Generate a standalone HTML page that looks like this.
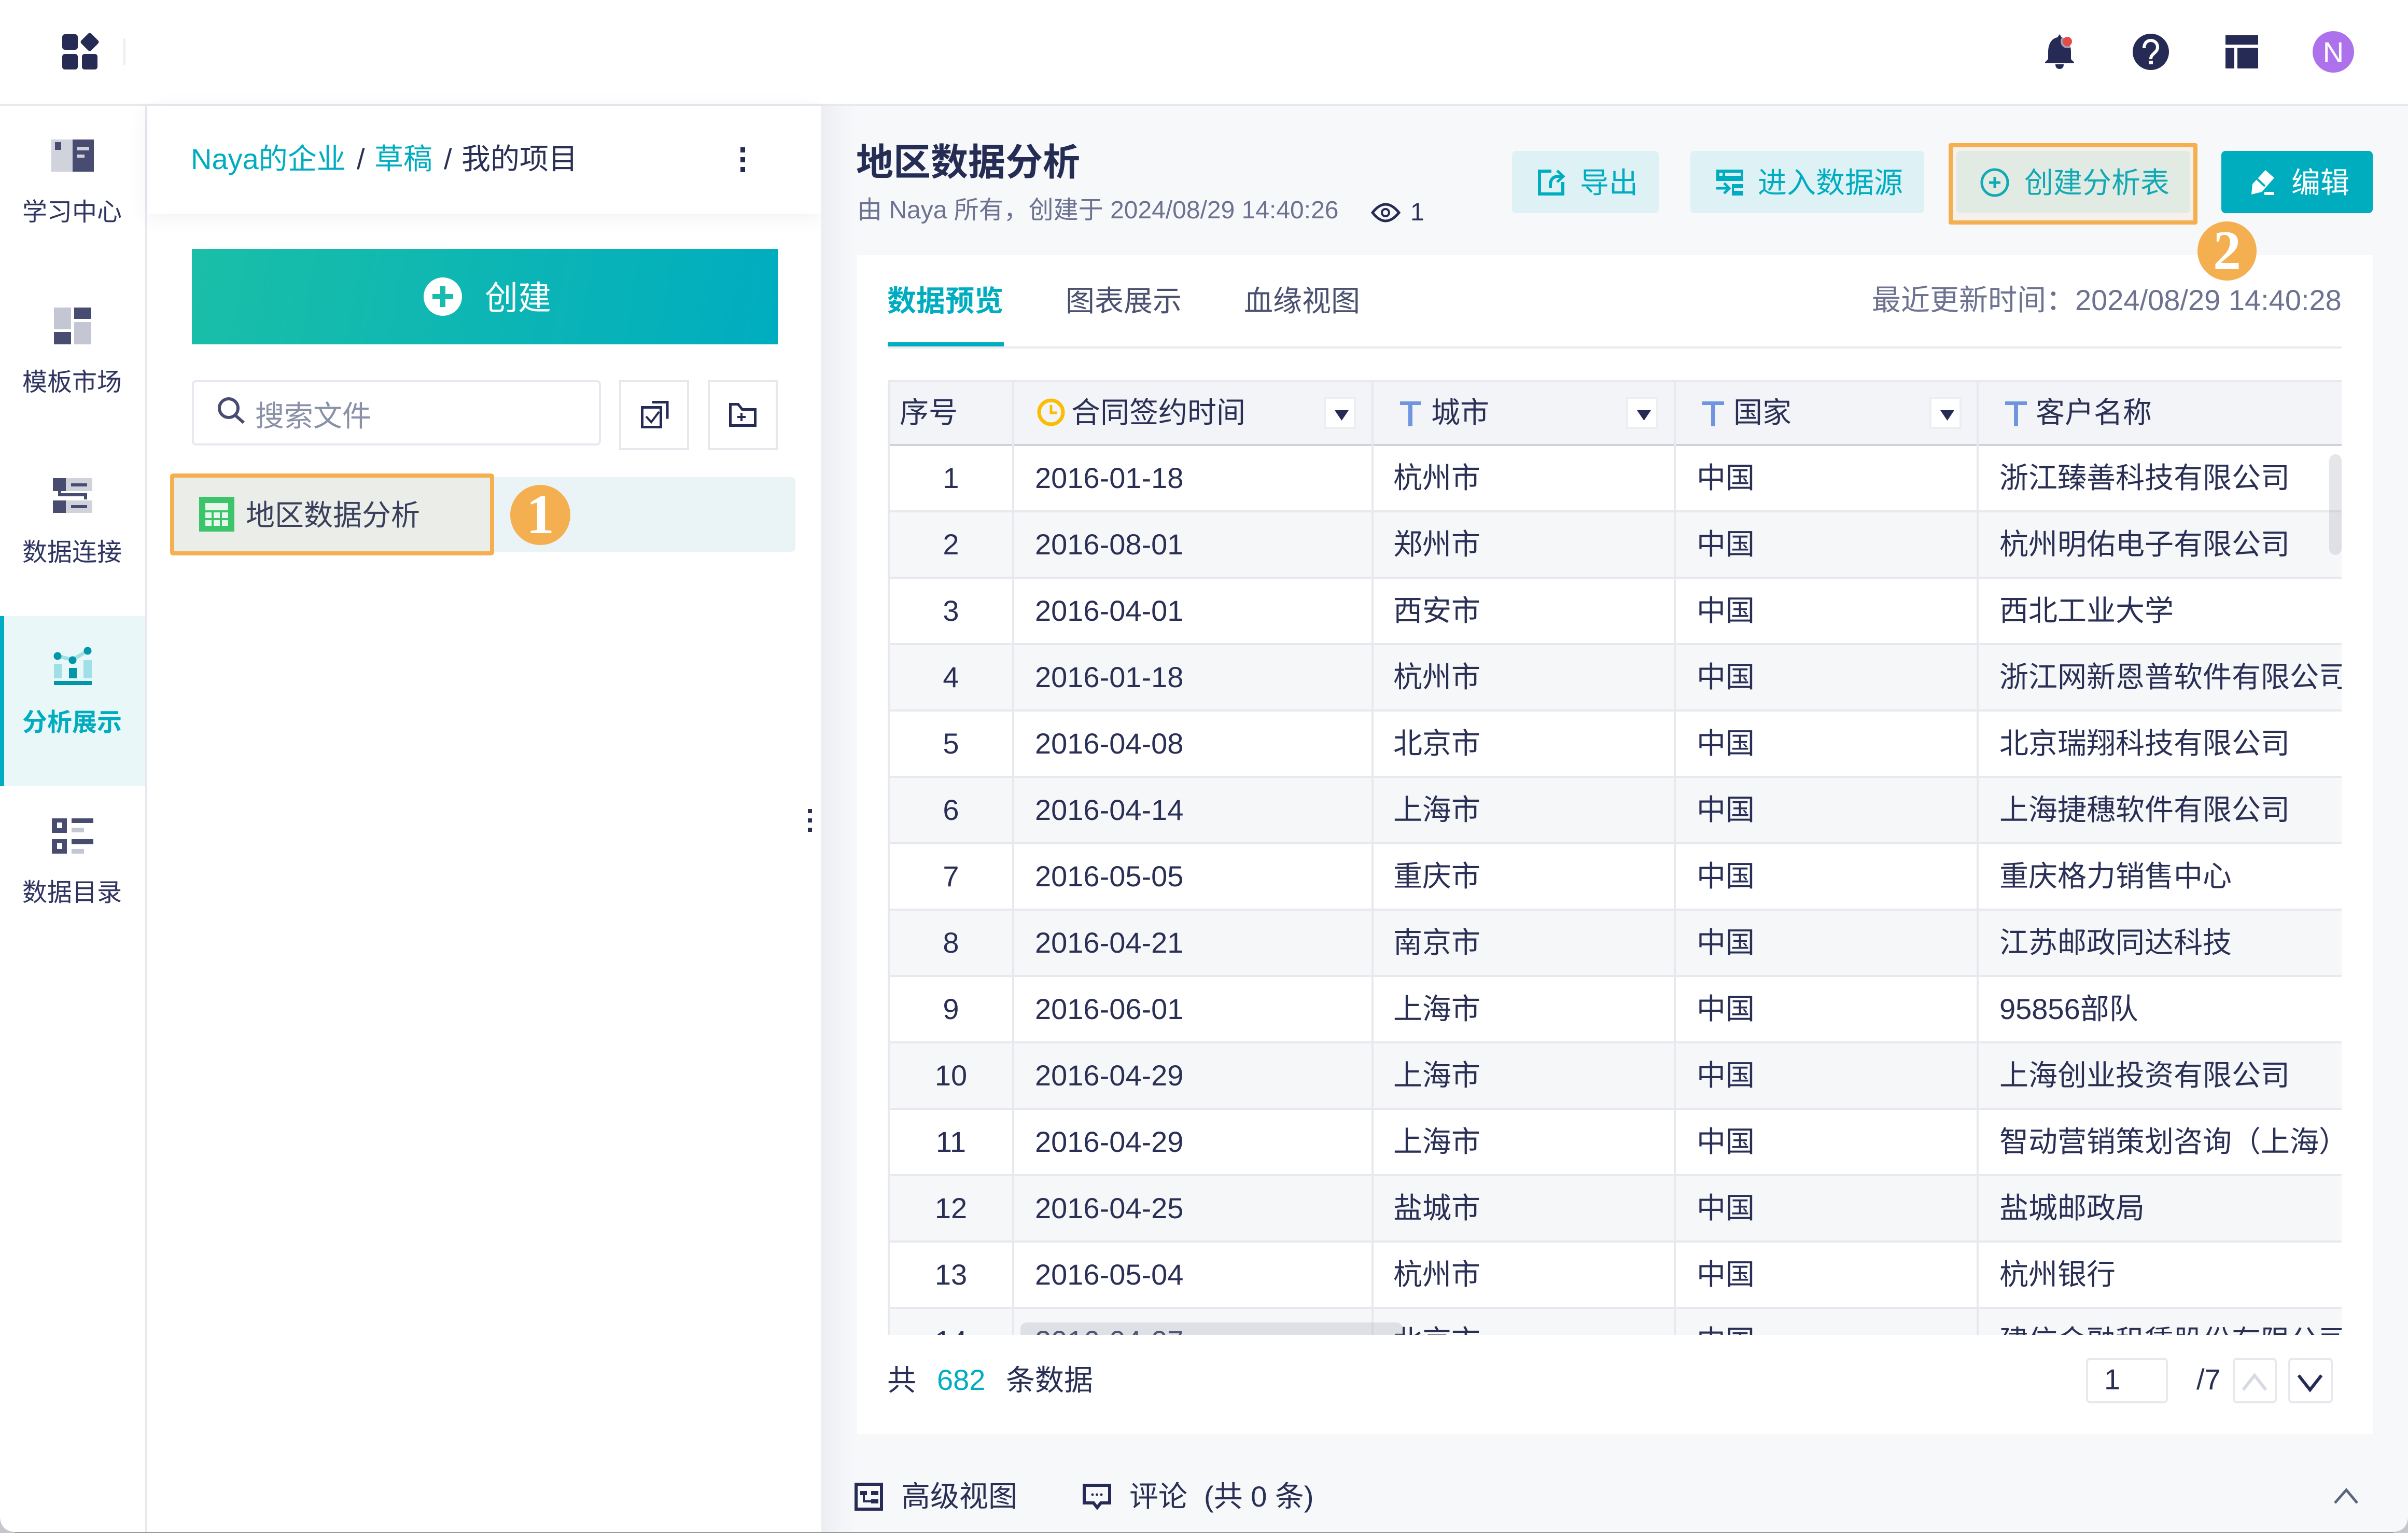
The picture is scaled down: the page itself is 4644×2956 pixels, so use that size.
<!DOCTYPE html>
<html lang="zh"><head><meta charset="utf-8"><title>地区数据分析</title>
<style>
*{box-sizing:border-box;margin:0;padding:0}
html,body{width:4644px;height:2956px;overflow:hidden;background:#fff}
body{position:relative;font-family:"Liberation Sans","Noto Sans CJK SC",sans-serif;color:#2a2f55;font-size:56px}
.a{position:absolute}
.t{position:absolute;white-space:nowrap;line-height:80px;font-size:56px}
.s{font-size:48px;color:#2f3560}
.teal{color:#00adc0}
.btn{position:absolute;top:291px;height:120px;border-radius:8px;background:#def1f5}
.r{position:absolute;left:0;width:2804px;height:128px;border-bottom:4px solid #e8e9ee;background:#fff}
.r.e{background:#f6f7f9}
.r i{position:absolute;top:0;font-style:normal;white-space:nowrap;line-height:124px}
.n{left:4px;width:236px;text-align:center}.d{left:284px}.c{left:975px}.g{left:1560px}.k{left:2144px}
.v{position:absolute;top:0;bottom:0;width:4px;background:#e8e9ee;z-index:2}
.dd{position:absolute;top:32px;width:62px;height:62px;background:#fff;border:4px solid #eceef2}
.h{position:absolute;top:0;line-height:126px;white-space:nowrap}
.pb{position:absolute;top:2618px;height:88px;border:4px solid #e8e9ee;border-radius:8px;background:#fff}
</style></head><body>

<!-- chrome -->
<div class="a" style="left:0;top:200px;width:4644px;height:4px;background:#e8e9ef"></div>
<div class="a" style="left:238px;top:74px;width:4px;height:52px;background:#eceef2"></div>
<div class="a" style="left:280px;top:204px;width:4px;height:2752px;background:#e8e9ef"></div>
<div class="a" style="left:0;top:1188px;width:280px;height:328px;background:#e9f7f9;border-left:8px solid #00adc0"></div>

<!-- left panel -->
<div class="a" style="left:284px;top:204px;width:1300px;height:208px;background:#fff;box-shadow:0 8px 36px rgba(40,50,90,.07)"></div>
<div class="a" style="left:370px;top:480px;width:1130px;height:184px;background:linear-gradient(100deg,#1abfa7 0%,#00adc0 100%)"></div>
<div class="a" style="left:370px;top:733px;width:789px;height:126px;background:#fff;border:4px solid #e6e9ef;border-radius:8px"></div>
<div class="a" style="left:1194px;top:733px;width:135px;height:135px;border:4px solid #e6e8ee"></div>
<div class="a" style="left:1365px;top:733px;width:135px;height:135px;border:4px solid #e6e8ee"></div>
<div class="a" style="left:900px;top:920px;width:634px;height:144px;background:#eaf3f6;border-radius:8px"></div>
<div class="a" style="left:328px;top:913px;width:625px;height:158px;background:#ebeee8;border:8px solid #f4af50;border-radius:6px"></div>
<div class="a" style="left:984px;top:935px;width:116px;height:116px;border-radius:50%;background:#f4af50"></div>
<div class="a" style="left:1558px;top:1560px;width:8px;height:8px;background:#2a2f55"></div>
<div class="a" style="left:1558px;top:1578px;width:8px;height:8px;background:#2a2f55"></div>
<div class="a" style="left:1558px;top:1596px;width:8px;height:8px;background:#2a2f55"></div>

<!-- right panel -->
<div class="a" style="left:1584px;top:204px;width:3060px;height:2752px;background:linear-gradient(90deg,#eceef2 0,#f4f5f8 40px,#f6f8fa 70px)"></div>
<div class="a" style="left:1653px;top:492px;width:2923px;height:2273px;background:#fff"></div>
<div class="btn" style="left:2916px;width:283px"></div>
<div class="btn" style="left:3260px;width:451px"></div>
<div class="a" style="left:3758px;top:276px;width:480px;height:157px;background:#f6f1ea;border:8px solid #f4af50;border-radius:4px"></div>
<div class="btn" style="left:3773px;width:451px;background:#e1ebe4"></div>
<div class="btn" style="left:4284px;width:292px;background:#00adbf"></div>
<div class="a" style="left:1712px;top:668px;width:2804px;height:4px;background:#e9eaef"></div>
<div class="a" style="left:1712px;top:660px;width:224px;height:8px;background:#00adc0"></div>

<!-- table -->
<div class="a" style="left:1712px;top:733px;width:2804px;height:1841px;overflow:hidden;background:#fff">
  <div class="a" style="left:0;top:0;width:2804px;height:127px;background:#f3f4f8;border-top:4px solid #e8e9ee;border-bottom:4px solid #cfd2da"></div>
  <div class="h" style="left:23px">序号</div>
  <div class="h" style="left:354px">合同签约时间</div>
  <div class="h" style="left:1048px">城市</div>
  <div class="h" style="left:1631px">国家</div>
  <div class="h" style="left:2214px">客户名称</div>
  <div class="dd" style="left:841px"></div>
  <div class="dd" style="left:1424px"></div>
  <div class="dd" style="left:2009px"></div>
  <div class="v" style="left:0"></div><div class="v" style="left:240px"></div><div class="v" style="left:933px"></div><div class="v" style="left:1516px"></div><div class="v" style="left:2100px"></div>
  <div class="r" style="top:127px"><i class="n">1</i><i class="d">2016-01-18</i><i class="c">杭州市</i><i class="g">中国</i><i class="k">浙江臻善科技有限公司</i></div>
  <div class="r e" style="top:255px"><i class="n">2</i><i class="d">2016-08-01</i><i class="c">郑州市</i><i class="g">中国</i><i class="k">杭州明佑电子有限公司</i></div>
  <div class="r" style="top:383px"><i class="n">3</i><i class="d">2016-04-01</i><i class="c">西安市</i><i class="g">中国</i><i class="k">西北工业大学</i></div>
  <div class="r e" style="top:511px"><i class="n">4</i><i class="d">2016-01-18</i><i class="c">杭州市</i><i class="g">中国</i><i class="k">浙江网新恩普软件有限公司</i></div>
  <div class="r" style="top:639px"><i class="n">5</i><i class="d">2016-04-08</i><i class="c">北京市</i><i class="g">中国</i><i class="k">北京瑞翔科技有限公司</i></div>
  <div class="r e" style="top:767px"><i class="n">6</i><i class="d">2016-04-14</i><i class="c">上海市</i><i class="g">中国</i><i class="k">上海捷穗软件有限公司</i></div>
  <div class="r" style="top:895px"><i class="n">7</i><i class="d">2016-05-05</i><i class="c">重庆市</i><i class="g">中国</i><i class="k">重庆格力销售中心</i></div>
  <div class="r e" style="top:1023px"><i class="n">8</i><i class="d">2016-04-21</i><i class="c">南京市</i><i class="g">中国</i><i class="k">江苏邮政同达科技</i></div>
  <div class="r" style="top:1151px"><i class="n">9</i><i class="d">2016-06-01</i><i class="c">上海市</i><i class="g">中国</i><i class="k">95856部队</i></div>
  <div class="r e" style="top:1279px"><i class="n">10</i><i class="d">2016-04-29</i><i class="c">上海市</i><i class="g">中国</i><i class="k">上海创业投资有限公司</i></div>
  <div class="r" style="top:1407px"><i class="n">11</i><i class="d">2016-04-29</i><i class="c">上海市</i><i class="g">中国</i><i class="k">智动营销策划咨询（上海）</i></div>
  <div class="r e" style="top:1535px"><i class="n">12</i><i class="d">2016-04-25</i><i class="c">盐城市</i><i class="g">中国</i><i class="k">盐城邮政局</i></div>
  <div class="r" style="top:1663px"><i class="n">13</i><i class="d">2016-05-04</i><i class="c">杭州市</i><i class="g">中国</i><i class="k">杭州银行</i></div>
  <div class="r e" style="top:1791px"><i class="n">14</i><i class="d">2016-04-07</i><i class="c">北京市</i><i class="g">中国</i><i class="k">建信金融租赁股份有限公司</i></div>
  <div class="a" style="left:2780px;top:143px;width:24px;height:194px;background:rgba(170,172,182,.3);border-radius:12px;z-index:3"></div>
  <div class="a" style="left:256px;top:1817px;width:737px;height:48px;background:rgba(170,172,182,.3);border-radius:12px;z-index:3"></div>
</div>

<div class="pb" style="left:4023px;width:158px"></div>
<div class="pb" style="left:4306px;width:85px"></div>
<div class="pb" style="left:4413px;width:86px"></div>

<!-- icons -->
<svg class="a" style="left:0;top:0" width="4644" height="2956" viewBox="0 0 4644 2956" xmlns="http://www.w3.org/2000/svg">
 <g fill="#252b55">
  <rect x="120" y="66" width="30" height="30" rx="5"/><rect x="120" y="104" width="30" height="30" rx="5"/><rect x="158" y="104" width="30" height="30" rx="5"/>
  <rect x="159.500" y="67.500" width="27" height="27" rx="4" transform="rotate(45 173 81)"/>
  <path d="M3972 66l4 6c12 2 18 14 18 28v14l6 6v2h-56v-2l6-6v-14c0-14 6-26 18-28z"/>
  <path d="M3964 124h16c0 6-3 9-8 9s-8-3-8-9z"/>
  <circle cx="4148" cy="100" r="35"/>
  <rect x="4292" y="68" width="63" height="18"/><rect x="4292" y="92" width="17" height="40"/><rect x="4315" y="92" width="40" height="40"/>
 </g>
 <circle cx="3987" cy="80" r="13" fill="#fff" opacity=".55"/><circle cx="3987" cy="80" r="9" fill="#e84a4a"/>
 <path d="M4135 93c0-9 5-15 13-15s13 6 13 13c0 6-4 9-7 12s-6 5-6 11" fill="none" stroke="#fff" stroke-width="6"/><rect x="4144" y="117" width="8" height="7" fill="#fff"/>
 <circle cx="4500" cy="100" r="40" fill="#ae71ec"/>
 <!-- sidebar -->
 <rect x="99" y="269" width="41" height="62" fill="#d0d2dc"/><rect x="140" y="269" width="41" height="62" fill="#474c70"/>
 <rect x="106" y="274" width="12" height="15" fill="#474c70"/><rect x="148" y="283" width="24" height="7" fill="#d0d2dc"/><rect x="148" y="298" width="15" height="6" fill="#d0d2dc"/>
 <rect x="104" y="593" width="33" height="42" fill="#c4c6d4"/><rect x="104" y="640" width="33" height="24" fill="#474c70"/><rect x="143" y="593" width="33" height="22" fill="#474c70"/><rect x="143" y="621" width="33" height="43" fill="#c4c6d4"/>
 <rect x="127" y="922" width="51" height="25" fill="#d0d2dc"/><rect x="127" y="965" width="51" height="24" fill="#d0d2dc"/>
 <rect x="102" y="922" width="25" height="25" fill="#474c70"/><rect x="102" y="965" width="25" height="24" fill="#474c70"/>
 <rect x="137" y="932" width="31" height="6" fill="#474c70"/><rect x="137" y="974" width="31" height="6" fill="#474c70"/>
 <path d="M115 947v7h50v9" fill="none" stroke="#474c70" stroke-width="6"/>
 <path d="M111 1265l29 7 29-17" fill="none" stroke="#9fe0e6" stroke-width="7"/>
 <rect x="104" y="1280" width="15" height="28" fill="#9fe0e6"/><rect x="161" y="1273" width="16" height="35" fill="#9fe0e6"/>
 <g fill="#0097a8"><circle cx="111" cy="1265" r="7.500"/><circle cx="140" cy="1273" r="7.500"/><circle cx="169" cy="1255" r="7.500"/><rect x="133" y="1288" width="15" height="20"/><rect x="104" y="1313" width="73" height="8"/></g>
 <g fill="#474c70"><rect x="100" y="1578" width="29" height="28"/><rect x="100" y="1618" width="29" height="28"/><rect x="138" y="1578" width="42" height="9"/><rect x="138" y="1618" width="42" height="10"/></g>
 <g fill="#fff"><rect x="110" y="1586" width="10" height="11"/><rect x="110" y="1626" width="10" height="11"/></g>
 <g fill="#c4c6d4"><rect x="138" y="1596" width="24" height="9"/><rect x="138" y="1637" width="24" height="9"/></g>
 <!-- left panel -->
 <circle cx="854" cy="572" r="37" fill="#fff"/><path d="M834 572h40M854 552v40" stroke="#17bbb0" stroke-width="10"/>
 <circle cx="441" cy="787" r="18" fill="none" stroke="#474c70" stroke-width="6"/><path d="M454 801l16 14" stroke="#474c70" stroke-width="6"/>
 <path d="M1238.500 785.500h36v38h-36z" fill="none" stroke="#252b55" stroke-width="5"/><path d="M1258 775.500h29v32" fill="none" stroke="#252b55" stroke-width="5"/><path d="M1246 803l10 11 15-20" fill="none" stroke="#252b55" stroke-width="4"/>
 <path d="M1408.500 779.500h15l8 10h25v31h-48z" fill="none" stroke="#252b55" stroke-width="5"/><path d="M1430 796v16M1422 804h16" stroke="#252b55" stroke-width="4"/>
 <rect x="1428" y="284" width="9" height="10" fill="#252b55"/><rect x="1428" y="303" width="9" height="10" fill="#252b55"/><rect x="1428" y="322" width="9" height="10" fill="#252b55"/>
 <rect x="384" y="958" width="68" height="67" fill="#3cc46a"/>
 <g fill="#fff" opacity=".88"><rect x="396" y="970" width="44" height="14"/><rect x="396" y="988" width="12" height="11"/><rect x="412" y="988" width="12" height="11"/><rect x="428" y="988" width="12" height="11"/><rect x="396" y="1003" width="12" height="11"/><rect x="412" y="1003" width="12" height="11"/><rect x="428" y="1003" width="12" height="11"/></g>
 <!-- header right -->
 <path d="M2647 410Q2672 378 2698 410Q2672 442 2647 410z" fill="none" stroke="#252b55" stroke-width="5"/><circle cx="2672" cy="410" r="7" fill="none" stroke="#252b55" stroke-width="4"/>
 <g fill="none" stroke="#00adc0" stroke-width="6">
  <path d="M2992 330h-23v44h45v-23"/><path d="M2990 362v-6c0-10 6-16 15-16h8"/><path d="M3003 329l12 11-12 11" stroke-width="5"/>
  <path d="M3310 363h24M3325 353l10 10-10 10" stroke-width="5"/>
 </g>
 <rect x="3310" y="327" width="52" height="22" fill="#00adc0"/><rect x="3327" y="333" width="30" height="6" fill="#def1f5"/><rect x="3316" y="333" width="6" height="6" fill="#def1f5"/>
 <rect x="3340" y="355" width="22" height="22" fill="#00adc0"/><rect x="3344" y="363" width="18" height="5" fill="#def1f5"/>
 <circle cx="3847" cy="352" r="25" fill="none" stroke="#12a9b4" stroke-width="5"/><path d="M3836 352h22M3847 341v22" stroke="#12a9b4" stroke-width="5"/>
 <path d="M4369 328l17 15-24 27-20 5 2-20z" fill="#fff"/><path d="M4353 345l15 14" stroke="#00adbf" stroke-width="4"/><rect x="4367" y="370" width="19" height="6" fill="#fff"/>
 <!-- table header icons -->
 <circle cx="2027" cy="795" r="23" fill="none" stroke="#fbbc05" stroke-width="7"/><path d="M2027 781v15h11" fill="none" stroke="#fbbc05" stroke-width="5"/>
 <g fill="#252b55"><path d="M2574 791h27l-13.500 20z"/><path d="M3157 791h27l-13.500 20z"/><path d="M3742 791h27l-13.500 20z"/></g>
 <g fill="#6f95de"><path d="M2700 774h40v7h-16v41h-8v-41h-16z"/><path d="M3283 774h42v7h-17v41h-8v-41h-17z"/><path d="M3867 774h42v7h-17v41h-8v-41h-17z"/></g>
 <!-- pager -->
 <path d="M4326 2680l22-28 22 28" fill="none" stroke="#d8dae3" stroke-width="6"/>
 <path d="M4433 2652l22 28 22-28" fill="none" stroke="#252b55" stroke-width="6"/>
 <!-- bottom -->
 <rect x="1651" y="2862" width="49" height="48" fill="none" stroke="#252b55" stroke-width="6"/>
 <g fill="#252b55"><rect x="1659" y="2875" width="13" height="8"/><rect x="1680" y="2875" width="14" height="8"/><rect x="1680" y="2891" width="14" height="8"/></g><path d="M1666 2883v12h14" fill="none" stroke="#252b55" stroke-width="4"/>
 <path d="M2091 2864h49v34h-17l-7 9-7-9h-18z" fill="none" stroke="#252b55" stroke-width="6"/>
 <g fill="#252b55"><circle cx="2107" cy="2882" r="2.500"/><circle cx="2115.500" cy="2882" r="2.500"/><circle cx="2124" cy="2882" r="2.500"/></g>
 <path d="M4503 2898l22-25 21 25" fill="none" stroke="#5a6480" stroke-width="5"/>
 <!-- window edge -->
 <rect x="0" y="2954" width="4644" height="2" fill="#999"/>
 <path d="M0 2926Q2 2952 28 2954L28 2956L0 2956Z" fill="#c6c7cc"/>
 <path d="M4644 2926Q4642 2952 4616 2954L4616 2956L4644 2956Z" fill="#c6c7cc"/>
 <text x="4500" y="120" text-anchor="middle" font-family="Liberation Sans" font-size="56" fill="#fff">N</text>
</svg>

<!-- text -->
<div class="t s" style="left:43px;top:370px">学习中心</div>
<div class="t s" style="left:43px;top:698px">模板市场</div>
<div class="t s" style="left:43px;top:1026px">数据连接</div>
<div class="t s teal" style="left:43px;top:1354px;font-weight:700">分析展示</div>
<div class="t s" style="left:43px;top:1682px">数据目录</div>

<div class="t teal" style="left:368px;top:267px">Naya的企业</div>
<div class="t" style="left:688px;top:267px">/</div>
<div class="t teal" style="left:722px;top:267px">草稿</div>
<div class="t" style="left:856px;top:267px">/</div>
<div class="t" style="left:890px;top:267px">我的项目</div>
<div class="t" style="left:935px;top:535px;font-size:64px;color:#fff">创建</div>
<div class="t" style="left:492px;top:763px;color:#8a90a8">搜索文件</div>
<div class="t" style="left:474px;top:954px;color:#3a3f5c">地区数据分析</div>
<div class="t" style="left:1000px;top:937px;width:84px;height:112px;line-height:112px;text-align:center;font-family:'Liberation Serif',serif;font-weight:700;font-size:108px;color:#fff">1</div>

<div class="t" style="left:1651px;top:274px;font-size:72px;font-weight:700;color:#262d54">地区数据分析</div>
<div class="t" style="left:1653px;top:366px;font-size:48px;color:#6c7290">由 Naya 所有，创建于 2024/08/29 14:40:26</div>
<div class="t" style="left:2720px;top:370px;font-size:48px">1</div>
<div class="t" style="left:3047px;top:313px;color:#00adc0">导出</div>
<div class="t" style="left:3390px;top:313px;color:#00adc0">进入数据源</div>
<div class="t" style="left:3904px;top:313px;color:#12a9b4">创建分析表</div>
<div class="t" style="left:4419px;top:313px;color:#fff">编辑</div>
<div class="a" style="left:4238px;top:427px;width:114px;height:114px;border-radius:50%;background:#f4af50"></div>
<div class="t" style="left:4238px;top:429px;width:114px;height:110px;line-height:110px;text-align:center;font-family:'Liberation Serif',serif;font-weight:700;font-size:108px;color:#fff">2</div>

<div class="t teal" style="left:1711px;top:541px;font-weight:700">数据预览</div>
<div class="t" style="left:2055px;top:541px;color:#4a5070">图表展示</div>
<div class="t" style="left:2399px;top:541px;color:#4a5070">血缘视图</div>
<div class="t" style="left:3610px;top:539px;color:#6c7290">最近更新时间：2024/08/29 14:40:28</div>

<div class="t" style="left:1711px;top:2622px">共</div>
<div class="t teal" style="left:1807px;top:2621px">682</div>
<div class="t" style="left:1940px;top:2622px">条数据</div>
<div class="t" style="left:4058px;top:2620px">1</div>
<div class="t" style="left:4236px;top:2620px">/7</div>

<div class="t" style="left:1738px;top:2846px">高级视图</div>
<div class="t" style="left:2178px;top:2846px">评论</div>
<div class="t" style="left:2322px;top:2846px">(共 0 条)</div>
</body></html>
